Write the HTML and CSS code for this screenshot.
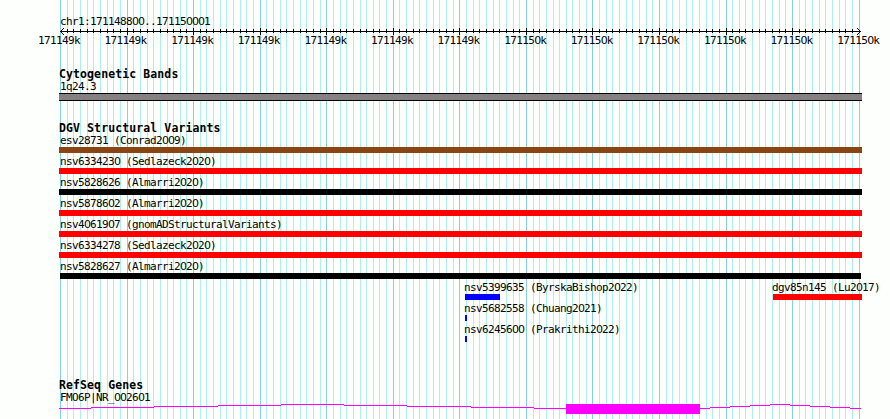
FILE: index.html
```html
<!DOCTYPE html>
<html lang="en">
<head>
<meta charset="utf-8">
<title>chr1:171148800..171150001</title>
<link rel="stylesheet" href="styles.css">
</head>
<body>
<main class="panel">
  <svg class="grid" width="890" height="419" shape-rendering="crispEdges" aria-hidden="true"></svg>

  <header class="ruler">
    <div class="label">chr1:171148800..171150001</div>
    <svg class="axis" width="802" height="7" shape-rendering="crispEdges" aria-hidden="true"></svg>
    <div class="ticks">
      <span>171149k</span><span>171149k</span><span>171149k</span><span>171149k</span><span>171149k</span><span>171149k</span><span>171149k</span><span>171150k</span><span>171150k</span><span>171150k</span><span>171150k</span><span>171150k</span><span>171150k</span>
    </div>
  </header>

  <section class="track bands">
    <h2>Cytogenetic Bands</h2>
    <div class="label">1q24.3</div>
    <div class="band"></div>
  </section>

  <section class="track variants">
    <h2>DGV Structural Variants</h2>
    <div class="row"><div class="label">esv28731 (Conrad2009)</div><div class="bar brown"></div></div>
    <div class="row"><div class="label">nsv6334230 (Sedlazeck2020)</div><div class="bar red"></div></div>
    <div class="row"><div class="label">nsv5828626 (Almarri2020)</div><div class="bar black"></div></div>
    <div class="row"><div class="label">nsv5878602 (Almarri2020)</div><div class="bar red"></div></div>
    <div class="row"><div class="label">nsv4061907 (gnomADStructuralVariants)</div><div class="bar red"></div></div>
    <div class="row"><div class="label">nsv6334278 (Sedlazeck2020)</div><div class="bar red"></div></div>
    <div class="row"><div class="label">nsv5828627 (Almarri2020)</div><div class="bar black inset"></div></div>
    <div class="row split">
      <div class="feature"><div class="label">nsv5399635 (ByrskaBishop2022)</div><div class="bar blue medium"></div></div>
      <div class="feature"><div class="label">dgv85n145 (Lu2017)</div><div class="bar red"></div></div>
    </div>
    <div class="row split">
      <div class="feature"><div class="label">nsv5682558 (Chuang2021)</div><div class="bar blue small"></div></div>
    </div>
    <div class="row split">
      <div class="feature"><div class="label">nsv6245600 (Prakrithi2022)</div><div class="bar blue small"></div></div>
    </div>
  </section>

  <section class="track genes">
    <h2>RefSeq Genes</h2>
    <div class="label">FMO6P|NR_002601</div>
    <svg class="gene" width="803" height="10" shape-rendering="crispEdges" aria-hidden="true">
      <path d="M0 4h32v1H0zM32 3h63v1H32zM95 2h64v1H95zM159 1h63v1H159zM222 0h63v1H222zM285 1h63v1H285zM348 2h64v1H348zM412 3h63v1H412zM475 4h32v1H475z"/>
      <path d="M507 0h134v10H507z"/>
      <path d="M641 4h10v1H641zM651 3h20v1H651zM671 2h20v1H671zM691 1h20v1H691zM711 0h20v1H711zM731 1h20v1H731zM751 2h20v1H751zM771 3h20v1H771zM791 4h11v1H791z"/>
    </svg>
  </section>
</main>
<script src="script.js"></script>
</body>
</html>
```
FILE: styles.css
```css
* { box-sizing: border-box; }
body { margin: 0; background: #fdfffc; }
.panel {
  position: relative;
  width: 890px;
  height: 419px;
  overflow: hidden;
  padding: 16px 0 0 59px;
  font: 11px/12px "DejaVu Sans Mono", monospace;
  letter-spacing: -0.62px;
  color: #000;
}
.grid { position: absolute; inset: 0; z-index: -1; display: block; }
.minor { fill: #afeeee; }
.major { fill: #87ceeb; }
.ruler { height: 53px; }
.axis { display: block; margin-left: 1px; }
.label { height: 12px; padding-left: 1px; white-space: pre; }
.zero { font-family: "DejaVu Sans", sans-serif; letter-spacing: -1px; }
.ticks { display: flex; gap: 24.6px; margin-left: -21px; }
.ticks > span { flex: none; width: 42px; }
.track h2 { margin: 0; height: 12px; font-size: 11.5px; line-height: 10px; letter-spacing: 0.1px; }
.band { width: 803px; height: 8px; background: #858082; border: solid #000; border-width: 1px 0; }
.bands { height: 54px; }
.variants { height: 257px; }
.row { height: 21px; }
.bar { width: 803px; height: 6px; }
.brown { background: #8b4513; }
.red { background: #f00; }
.black { background: #000; }
.blue { background: #00f; }
.inset { width: 801px; margin-left: 1px; }
.split { display: grid; grid-template-columns: 308px 1fr; padding-left: 406px; }
.split .label { padding-left: 0; margin-left: -1px; }
.split .bar { width: 89px; }
.split .medium { width: 35px; }
.split .small { width: 2px; }
.gene { display: block; fill: #f0f; }
```
FILE: script.js
```js
const NS = "http://www.w3.org/2000/svg";
const grid = document.querySelector(".grid");
const axis = document.querySelector(".axis");

function rect(parent, x, y, width, height, cls) {
  const node = document.createElementNS(NS, "rect");
  const attrs = { x, y, width, height };
  for (const key in attrs) node.setAttribute(key, attrs[key]);
  if (cls) node.setAttribute("class", cls);
  parent.appendChild(node);
}

// Grid lines and ruler ticks, every tenth one is major.
for (let i = 0; i <= 120; i++) {
  const x = Math.round(0.03 + i * 6.655);
  const major = i % 10 === 0;
  rect(grid, x + 60, 0, 1, 419, major ? "major" : "minor");
  if (i > 0 && i < 120) rect(axis, x, major ? 0 : 1, 1, major ? 7 : 4);
}
rect(axis, 0, 3, 801, 1);
for (let i = 1; i <= 3; i++) {
  rect(axis, i, 3 - i, 1, 1);
  rect(axis, i, 3 + i, 1, 1);
  rect(axis, 800 - i, 3 - i, 1, 1);
  rect(axis, 800 - i, 3 + i, 1, 1);
}

// Zeros are drawn plain, without the inner dot.
document.querySelectorAll(".label, .ticks > span").forEach(el => {
  el.innerHTML = el.textContent.replace(/0/g, '<span class="zero">0</span>');
});
```
